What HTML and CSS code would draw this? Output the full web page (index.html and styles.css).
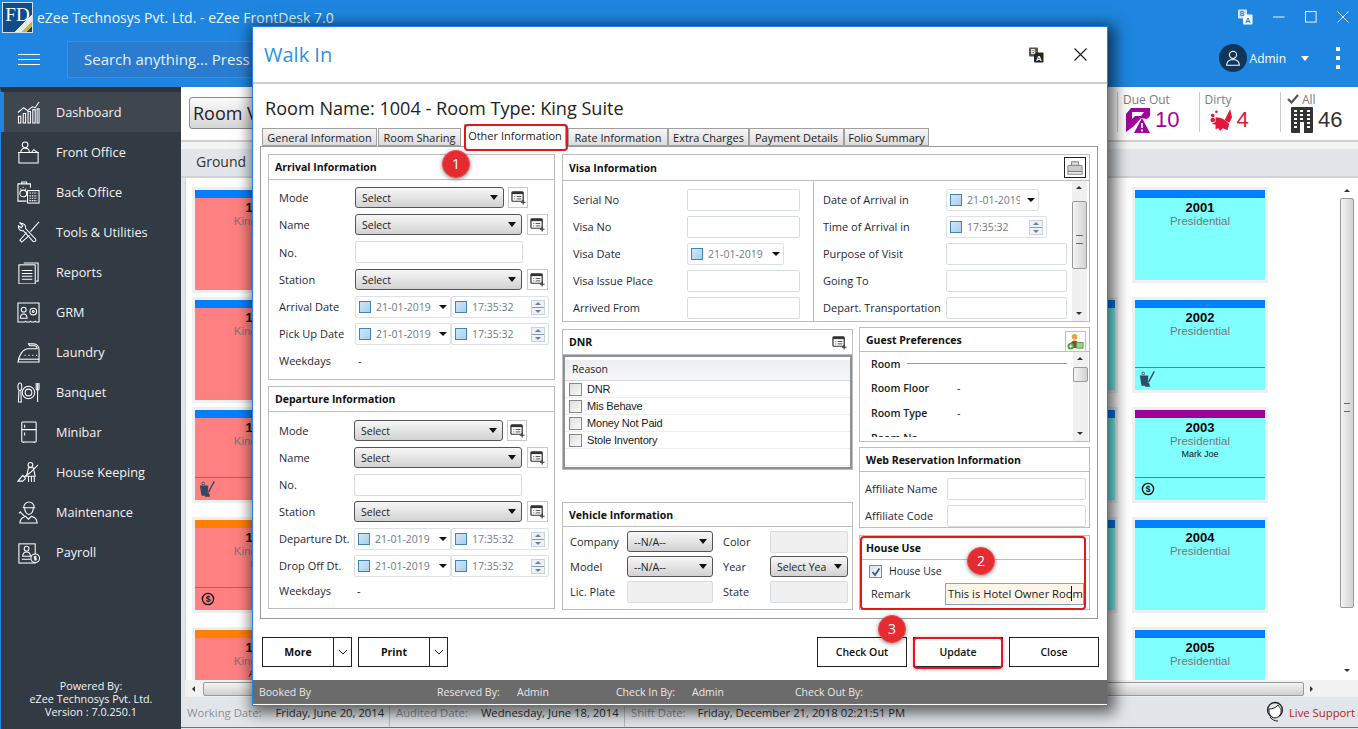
FILE: index.html
```html
<!DOCTYPE html>
<html lang="en">
<head>
<meta charset="utf-8">
<title>eZee FrontDesk</title>
<link rel="stylesheet" href="styles.css">
</head>
<body>
<svg class="sprite" aria-hidden="true">
  <symbol id="i-add" viewBox="0 0 16 16"><rect x="1" y="2" width="12" height="10" rx="1" fill="none" stroke="#333" stroke-width="1.3"/><rect x="1" y="2" width="12" height="2.4" fill="#333"/><path d="M3.500 7h1M6 7h5M3.500 9.500h1M6 9.500h5" stroke="#333" stroke-width=".9"/><path d="M13 10.500v5M10.500 13h5" stroke="#333" stroke-width="1.200"/></symbol>
  <symbol id="i-mop" viewBox="0 0 20 18"><path d="M1 5h10l-1 12H3z" fill="#2f4a63"/><circle cx="5" cy="2.500" r="1.600" fill="none" stroke="#2f4a63"/><path d="M18 0l-7 13" stroke="#2f4a63" stroke-width="1.600"/><path d="M8 13l4 1 1 4H7z" fill="#2f4a63"/></symbol>
  <symbol id="i-dollar" viewBox="0 0 14 14"><circle cx="7" cy="7" r="5.600" fill="none" stroke="#111" stroke-width="1.400"/><text x="7" y="10" font-size="8.500" font-weight="700" text-anchor="middle" font-family="Liberation Sans, sans-serif" fill="#111">$</text></symbol>
</svg>

<div class="app">
  <header class="header">
    <div class="titlebar">
      <div class="logo"><span>FD</span></div>
      <div class="app-title">eZee Technosys Pvt. Ltd. - eZee FrontDesk 7.0</div>
      <div class="win-controls">
        <svg class="win-lang" viewBox="0 0 16 16"><rect x="1" y="0.500" width="9" height="9" rx="1" fill="#cfe4f7"/><rect x="6" y="5.500" width="9.500" height="10" rx="1" fill="#fff"/><text x="10.800" y="14" font-size="8" font-weight="700" text-anchor="middle" fill="#1e87e0" font-family="Liberation Sans, sans-serif">A</text><text x="5" y="7.400" font-size="6.500" font-weight="700" text-anchor="middle" fill="#1e87e0" font-family="Liberation Sans, sans-serif">B</text></svg>
        <svg class="win-btn" viewBox="0 0 13 13"><path d="M0 6.500h12.500" stroke="#fff"/></svg>
        <svg class="win-btn" viewBox="0 0 13 13"><rect x=".5" y=".5" width="11.500" height="11.500" fill="none" stroke="#fff"/></svg>
        <svg class="win-btn" viewBox="0 0 13 13"><path d="M.5.5l12 12M12.500.5l-12 12" stroke="#fff"/></svg>
      </div>
    </div>
    <div class="navbar">
      <div class="hamburger"><i></i><i></i><i></i></div>
      <div class="search">Search anything... Press F3</div>
      <div class="user">
        <div class="avatar"><svg viewBox="0 0 20 20"><circle cx="10" cy="6.500" r="4" fill="none" stroke="#fff" stroke-width="1.200"/><path d="M3 18c0-4 3-5.500 4.500-6h5c1.500.5 4.500 2 4.500 6z" fill="none" stroke="#fff" stroke-width="1.200"/></svg></div>
        <span class="user-name">Admin</span>
        <span class="user-caret"></span>
        <div class="kebab"><i></i><i></i><i></i></div>
      </div>
    </div>
  </header>

  <div class="workspace">
    <aside class="sidebar">
      <nav class="menu">
        <a class="menu-item active"><svg viewBox="0 0 24 24"><path d="M1.500 23v-7h2.500v7zM6.500 23V13H9v10zM11.500 23V11H14v12zM16.500 23V9H19v14zM21 23V8h2v15z"/><path d="M1 12l6-5 4 3 5-4 3 1 4-6"/></svg><span>Dashboard</span></a>
        <a class="menu-item"><svg viewBox="0 0 24 24"><circle cx="8.500" cy="4" r="3"/><path d="M4 12c0-3 2-4.500 4.500-4.500S13 9 13 12"/><path d="M1 12h22M2 12v11h20V12M15 12l2.500-3 2 1.500 2 1.500"/></svg><span>Front Office</span></a>
        <a class="menu-item"><svg viewBox="0 0 24 24"><path d="M14 7V3H1v18h9M5 3V1h5v2"/><circle cx="6.500" cy="13" r="3.500"/><path d="M6.500 6v1M3.500 8l1 1M9.500 8l-1 1"/><rect x="11" y="10" width="12" height="13"/><path d="M13 12.500h8M13 15.500h8M13 18h8M13 20.500h8" stroke-dasharray="1.500 1"/></svg><span>Back Office</span></a>
        <a class="menu-item"><svg viewBox="0 0 24 24"><path d="M3 2l3 3-1.500 2-3-2c-.5 3 2 6 5 5l10 11c1.500 1.500 4 0 3-2L9 8c1-3-2-6-6-6z"/><path d="M23 1l-9 10M13 15l-8 7-2-2 7-8"/></svg><span>Tools &amp; Utilities</span></a>
        <a class="menu-item"><svg viewBox="0 0 24 24"><path d="M7 2h15v19h-2"/><rect x="2" y="4" width="17" height="20"/><path d="M5 10h11M5 13h11M5 16h11M5 19h11"/></svg><span>Reports</span></a>
        <a class="menu-item"><svg viewBox="0 0 24 24"><path d="M1 2h22v20h-3l-1-1-1 1h-3l-1-1-1 1h-3l-1-1-1 1H1z"/><circle cx="7" cy="9" r="2.500"/><path d="M3.500 18c0-3 1.500-4.500 3.500-4.500S10.500 15 10.500 18z"/><circle cx="17" cy="11" r="3.500"/><circle cx="17" cy="11" r="1"/></svg><span>GRM</span></a>
        <a class="menu-item"><svg viewBox="0 0 24 24"><path d="M23 22V9c0-3-2-6-6-6h-5l1 2h5c2 0 3 1 3 3H12C6 8 2 15 1 22z"/><path d="M1 19h22"/><path d="M8 15h1M12 15h1M16 15h1M20 15h1"/></svg><span>Laundry</span></a>
        <a class="menu-item"><svg viewBox="0 0 24 24"><ellipse cx="3" cy="6" rx="2" ry="4"/><path d="M2 10l-.5 12h3L4 10"/><circle cx="12" cy="12" r="6.500"/><circle cx="12" cy="12" r="3.500"/><path d="M20 2v6c0 1 1 1.500 1.500 1.500S23 9 23 8V2M21.500 2v20"/></svg><span>Banquet</span></a>
        <a class="menu-item"><svg viewBox="0 0 24 24"><rect x="5" y="1" width="15" height="21" rx="1"/><path d="M5 9h15M8 4v3M8 12v3M7 22v1M18 22v1"/></svg><span>Minibar</span></a>
        <a class="menu-item"><svg viewBox="0 0 24 24"><circle cx="14" cy="4" r="2.500"/><path d="M12 7l-2 9h9l-2-9z"/><path d="M22 4l-8 8-7 5M1 21l5-6 3 3-3 3zM12 16v6M15 16v6M18 16v6"/></svg><span>House Keeping</span></a>
        <a class="menu-item"><svg viewBox="0 0 24 24"><path d="M7 7c0-4 3-6 5.500-6S18 3 18 7zM6 7h13"/><path d="M8 7c0 4 2 7 4.500 7S17 11 17 7"/><path d="M3 23c0-4 3-6 6-7l3 3 3-3c4 1 6 3 6 7z"/><path d="M3 11l5 5M2 13l2-2"/></svg><span>Maintenance</span></a>
        <a class="menu-item"><svg viewBox="0 0 24 24"><rect x="2" y="3" width="17" height="20"/><circle cx="10" cy="8" r="2.500"/><path d="M6 16c0-3 2-4.500 4-4.500s4 1.500 4 4.500zM5 19h9"/><circle cx="19" cy="18" r="4.500" fill="#323a43"/><path d="M19 15.500v5M20.500 16.500h-2.500v1.500h2v1.500h-2"/></svg><span>Payroll</span></a>
      </nav>
      <div class="powered">
        <div>Powered By:</div>
        <div>eZee Technosys Pvt. Ltd.</div>
        <div>Version : 7.0.250.1</div>
      </div>
    </aside>

    <main class="main">
      <div class="toolbar">
        <button class="room-view">Room View</button>
        <div class="stats">
          <div class="stat">
            <div class="stat-label">Due Out</div>
            <div class="stat-value due">
              <svg viewBox="0 0 24 25"><path d="M0 22V6l5-6h19v8l-3 3-6-1-7 8-8 6z" fill="#a0059a"/><path d="M6 4h12l-3 4H9L6 11z" fill="#fff"/><path d="M16 10l8 15H8z" fill="#a0059a"/><path d="M16 15v5M16 21.500v2" stroke="#fff" stroke-width="1.800"/></svg>
              <span>10</span>
            </div>
          </div>
          <div class="stat">
            <div class="stat-label">Dirty</div>
            <div class="stat-value dirty">
              <svg viewBox="0 0 24 25"><path d="M22 0l-6 12 5 3 3-6z" fill="#e0183c"/><path d="M6 9c4 0 7 1 10 3l5 4-2 7-5-2-3 3-2-3-3 1v-5l-4-1 4-2z" fill="#e0183c"/><circle cx="3" cy="7" r="2" fill="#e0183c"/><circle cx="7" cy="3" r="1.400" fill="#e0183c"/><circle cx="3" cy="12" r="2.500" fill="#e0183c"/></svg>
              <span>4</span>
            </div>
          </div>
          <div class="stat">
            <div class="stat-label"><svg class="check" viewBox="0 0 12 10"><path d="M1 5l3.500 3.500L11 1" fill="none" stroke="#555" stroke-width="2.200"/></svg>All</div>
            <div class="stat-value all">
              <svg viewBox="0 0 22 26"><rect width="22" height="26" rx="1" fill="#333"/><path d="M3 4h3M9 4h3M16 4h3M3 8h3M9 8h3M16 8h3M3 12h3M9 12h3M16 12h3M3 16h3M16 16h3M3 20h3M16 20h3" stroke="#fff" stroke-width="2"/><rect x="9" y="15" width="4" height="11" fill="#fff"/></svg>
              <span>46</span>
            </div>
          </div>
        </div>
      </div>
      <div class="toolbar-gap"></div>
      <div class="floor-bar">Ground</div>
      <div class="floor-area">
        <div class="room-grid">
          <div class="room-col">
            <div class="room pink tall"><div class="room-top blue"></div><b>1001</b><span>King Suite</span></div>
            <div class="room pink tall"><div class="room-top blue"></div><b>1002</b><span>King Suite</span></div>
            <div class="room pink"><div class="room-top blue"></div><b>1003</b><span>King Suite</span><div class="room-foot"><svg class="mop"><use href="#i-mop"/></svg></div></div>
            <div class="room pink"><div class="room-top orange"></div><b>1004</b><span>King Suite</span><em>Lara</em><div class="room-foot"><svg class="dollar"><use href="#i-dollar"/></svg></div></div>
            <div class="room pink"><div class="room-top orange"></div><b>1005</b><span>King Suite</span><em>Abdul</em></div>
          </div>
          <div class="room-col far">
            <div class="room ghost"></div>
            <div class="room cyan"><div class="room-top blue"></div></div>
            <div class="room cyan"><div class="room-top blue"></div></div>
            <div class="room cyan"><div class="room-top blue"></div></div>
            <div class="room ghost"></div>
          </div>
          <div class="room-col">
            <div class="room cyan"><div class="room-top blue"></div><b>2001</b><span>Presidential</span></div>
            <div class="room cyan"><div class="room-top blue"></div><b>2002</b><span>Presidential</span><div class="room-foot"><svg class="mop"><use href="#i-mop"/></svg></div></div>
            <div class="room cyan"><div class="room-top purple"></div><b>2003</b><span>Presidential</span><em>Mark Joe</em><div class="room-foot"><svg class="dollar"><use href="#i-dollar"/></svg></div></div>
            <div class="room cyan"><div class="room-top blue"></div><b>2004</b><span>Presidential</span></div>
            <div class="room cyan"><div class="room-top blue"></div><b>2005</b><span>Presidential</span></div>
          </div>
        </div>
        <div class="vscroll page-v"><i class="up"></i><i class="thumb"></i><i class="down"></i></div>
      </div>
      <div class="hscroll"><i class="left"></i><i class="thumb"></i><i class="right"></i></div>
      <footer class="status">
        <div class="status-cell first"><span>Working Date:</span><b>Friday, June 20, 2014</b></div>
        <div class="status-cell second"><span>Audited Date:</span><b>Wednesday, June 18, 2014</b></div>
        <div class="status-cell third"><span>Shift Date:</span><b>Friday, December 21, 2018 02:21:51 PM</b></div>
        <div class="live">
          <svg viewBox="0 0 20 22"><circle cx="10" cy="9" r="7.500" fill="none" stroke="#222" stroke-width="1.300"/><path d="M4 8c3 0 7-1 9-4 1 2 2 3 3 4v4c-1 3-4 5-6 5s-5-2-6-5z" fill="#fff" stroke="#222"/><path d="M5 16c2 3 5 4 8 4" fill="none" stroke="#222"/></svg>
          <span>Live Support</span>
        </div>
      </footer>
    </main>
  </div>

  <section class="modal">
    <div class="modal-head">
      <h1>Walk In</h1>
      <svg class="modal-lang" viewBox="0 0 16 16"><rect x="1" y=".5" width="9" height="9" rx="1" fill="#555"/><rect x="6" y="5.500" width="9.500" height="10" rx="1" fill="#222"/><text x="10.800" y="14" font-size="8" font-weight="700" text-anchor="middle" fill="#fff" font-family="Liberation Sans, sans-serif">A</text><text x="5" y="7.400" font-size="6.500" font-weight="700" text-anchor="middle" fill="#fff" font-family="Liberation Sans, sans-serif">B</text></svg>
      <svg class="modal-close" viewBox="0 0 13 13"><path d="M.5.5l12 12M12.500.5l-12 12" stroke="#222" stroke-width="1.200"/></svg>
    </div>
    <h2 class="room-name">Room Name: 1004 - Room Type: King Suite</h2>
    <div class="tabs">
      <div class="tab t1">General Information</div>
      <div class="tab t2">Room Sharing</div>
      <div class="tab selected t3">Other Information</div>
      <div class="tab t4">Rate Information</div>
      <div class="tab t5">Extra Charges</div>
      <div class="tab t6">Payment Details</div>
      <div class="tab t7">Folio Summary</div>
    </div>
    <div class="tab-panel">
      <div class="col-left">
        <div class="panel arrival">
          <div class="panel-head">Arrival Information</div>
          <div class="form">
            <div class="row"><label>Mode</label><div class="select w149">Select</div><button class="add near"><svg><use href="#i-add"/></svg></button></div>
            <div class="row"><label>Name</label><div class="select w167">Select</div><button class="add"><svg><use href="#i-add"/></svg></button></div>
            <div class="row tall-row"><label>No.</label><div class="input w168"></div></div>
            <div class="row"><label>Station</label><div class="select w167">Select</div><button class="add"><svg><use href="#i-add"/></svg></button></div>
            <div class="row"><label>Arrival Date</label><div class="date w96"><i class="cb"></i>21-01-2019<i class="caret"></i></div><div class="date w98"><i class="cb"></i>17:35:32<i class="spin"></i></div></div>
            <div class="row"><label>Pick Up Date</label><div class="date w96"><i class="cb"></i>21-01-2019<i class="caret"></i></div><div class="date w98"><i class="cb"></i>17:35:32<i class="spin"></i></div></div>
            <div class="row"><label>Weekdays</label><span class="dash">-</span></div>
          </div>
        </div>
        <div class="panel departure">
          <div class="panel-head">Departure Information</div>
          <div class="form">
            <div class="row tall-row"><label>Mode</label><div class="select w149">Select</div><button class="add near"><svg><use href="#i-add"/></svg></button></div>
            <div class="row"><label>Name</label><div class="select w168">Select</div><button class="add"><svg><use href="#i-add"/></svg></button></div>
            <div class="row"><label>No.</label><div class="input w168"></div></div>
            <div class="row"><label>Station</label><div class="select w168">Select</div><button class="add"><svg><use href="#i-add"/></svg></button></div>
            <div class="row"><label>Departure Dt.</label><div class="date w97"><i class="cb"></i>21-01-2019<i class="caret"></i></div><div class="date w98"><i class="cb"></i>17:35:32<i class="spin"></i></div></div>
            <div class="row"><label>Drop Off Dt.</label><div class="date w97"><i class="cb"></i>21-01-2019<i class="caret"></i></div><div class="date w98"><i class="cb"></i>17:35:32<i class="spin"></i></div></div>
            <div class="row last"><label>Weekdays</label><span class="dash">-</span></div>
          </div>
        </div>
      </div>
      <div class="col-right">
        <div class="panel visa">
          <div class="panel-head">Visa Information
            <button class="print"><svg viewBox="0 0 18 16"><path d="M5 5V1h8v4" fill="#ddd" stroke="#777"/><rect x="1" y="5" width="16" height="7" rx="1" fill="#ccc" stroke="#777"/><rect x="1" y="12" width="16" height="3" fill="#eee" stroke="#777"/></svg></button>
          </div>
          <div class="visa-body">
            <div class="visa-left">
              <div class="vrow"><label>Serial No</label><div class="input w113"></div></div>
              <div class="vrow"><label>Visa No</label><div class="input w113"></div></div>
              <div class="vrow"><label>Visa Date</label><div class="date w97"><i class="cb"></i>21-01-2019<i class="caret"></i></div></div>
              <div class="vrow"><label>Visa Issue Place</label><div class="input w113"></div></div>
              <div class="vrow"><label>Arrived From</label><div class="input w113"></div></div>
            </div>
            <div class="visa-right">
              <div class="vrow"><label>Date of Arrival in</label><div class="date w93"><i class="cb"></i><span class="clip">21-01-2019</span><i class="caret"></i></div></div>
              <div class="vrow"><label>Time of Arrival in</label><div class="date w101"><i class="cb"></i>17:35:32<i class="spin"></i></div></div>
              <div class="vrow"><label>Purpose of Visit</label><div class="input w121"></div></div>
              <div class="vrow"><label>Going To</label><div class="input w121"></div></div>
              <div class="vrow"><label>Depart. Transportation</label><div class="input w121"></div></div>
            </div>
            <div class="vscroll visa-v"><i class="up"></i><i class="thumb"></i><i class="down"></i></div>
          </div>
        </div>
        <div class="lower">
          <div class="lower-left">
            <div class="panel dnr">
              <div class="panel-head">DNR<svg class="dnr-add"><use href="#i-add"/></svg></div>
              <div class="reason-list">
                <div class="reason-head">Reason</div>
                <div class="reason"><i class="box"></i>DNR</div>
                <div class="reason"><i class="box"></i>Mis Behave</div>
                <div class="reason"><i class="box"></i>Money Not Paid</div>
                <div class="reason"><i class="box"></i>Stole Inventory</div>
                <div class="reason"></div>
              </div>
            </div>
            <div class="panel vehicle">
              <div class="panel-head">Vehicle Information</div>
              <div class="vehicle-grid">
                <label>Company</label><div class="select v-sel">--N/A--</div><label>Color</label><div class="input disabled"></div>
                <label>Model</label><div class="select v-sel">--N/A--</div><label>Year</label><div class="select year">Select Yea</div>
                <label>Lic. Plate</label><div class="input disabled v-sel"></div><label>State</label><div class="input disabled"></div>
              </div>
            </div>
          </div>
          <div class="lower-right">
            <div class="panel guest">
              <div class="panel-head">Guest Preferences
                <button class="pref-btn"><svg viewBox="0 0 18 18"><circle cx="8" cy="4" r="3" fill="#e8a33c"/><path d="M3 16c0-5 2-8 5-8s5 3 5 8z" fill="#b23a2a"/><rect x="10" y="10" width="7" height="6" fill="#9fd08a" stroke="#5a9c4a"/><circle cx="4" cy="14" r="3.500" fill="#3ba53b"/><path d="M2 14h4M4 12v4" stroke="#fff"/></svg></button>
              </div>
              <div class="guest-body">
                <div class="guest-list">
                  <div class="g-row"><b>Room</b><i class="g-line"></i></div>
                  <div class="g-row"><b>Room Floor</b><span>-</span></div>
                  <div class="g-row"><b>Room Type</b><span>-</span></div>
                  <div class="g-row"><b>Room No</b></div>
                </div>
                <div class="vscroll guest-v"><i class="up"></i><i class="thumb"></i><i class="down"></i></div>
              </div>
            </div>
            <div class="panel web">
              <div class="panel-head">Web Reservation Information</div>
              <div class="web-body">
                <div class="wrow"><label>Affiliate Name</label><div class="input grow"></div></div>
                <div class="wrow"><label>Affiliate Code</label><div class="input grow"></div></div>
              </div>
            </div>
            <div class="panel house">
              <div class="panel-head">House Use</div>
              <div class="house-check"><i class="checked"><svg viewBox="0 0 10 10"><path d="M1.500 5l2.500 3L8.500 1.500" fill="none" stroke="#35588f" stroke-width="1.800"/></svg></i>House Use</div>
              <div class="house-remark"><label>Remark</label><div class="remark">This is Hotel Owner Roo<span class="cursor">m</span></div></div>
            </div>
          </div>
        </div>
      </div>
    </div>
    <div class="actions">
      <div class="split"><button>More</button><button class="split-arrow"><svg viewBox="0 0 10 6"><path d="M1 1l4 4 4-4" fill="none" stroke="#222"/></svg></button></div>
      <div class="split"><button>Print</button><button class="split-arrow"><svg viewBox="0 0 10 6"><path d="M1 1l4 4 4-4" fill="none" stroke="#222"/></svg></button></div>
      <button class="act first-act">Check Out</button>
      <button class="act">Update</button>
      <button class="act">Close</button>
    </div>
    <div class="modal-foot">
      <span class="f1">Booked By</span>
      <span class="f2">Reserved By:</span><span class="f3">Admin</span>
      <span class="f4">Check In By:</span><span class="f5">Admin</span>
      <span class="f6">Check Out By:</span>
    </div>
    <div class="mark mark-tab"></div>
    <div class="mark mark-house"></div>
    <div class="mark mark-update"></div>
    <div class="badge b1">1</div>
    <div class="badge b2">2</div>
    <div class="badge b3">3</div>
  </section>
</div>
</body>
</html>
```
FILE: styles.css
```css
* { box-sizing: border-box; }
html, body { margin: 0; padding: 0; }
body { font-family: "Open Sans", "Noto Sans", sans-serif; font-size: 11px; color: #222; background: #fff; }
i, em { font-style: normal; }
.sprite { display: none; }
button { font: inherit; cursor: default; }

.app { position: relative; width: 1358px; height: 729px; overflow: hidden; display: flex; flex-direction: column; }

/* header */
.header { height: 87px; background: #1e86e0; color: #fff; flex: none; }
.titlebar { height: 41px; display: flex; align-items: flex-start; padding: 2px 9px 0 2px; }
.logo { width: 31px; height: 31px; border: 1px solid #cfe2f5; background: linear-gradient(135deg, #0f4d8a 0 70%, #e8e8e8 70% 82%, #d7b21c 82% 90%, #1b3f7a 90%); display: flex; justify-content: center; padding-top: 1px; }
.logo span { font-family: "Liberation Serif", serif; font-size: 19px; line-height: 22px; color: #fff; }
.app-title { margin-left: 4px; font-size: 14px; line-height: 32px; color: #eef6fd; }
.win-controls { margin-left: auto; display: flex; align-items: center; height: 30px; gap: 20px; }
.win-lang { width: 16px; height: 16px; }
.win-btn { width: 12px; height: 12px; }
.navbar { height: 46px; padding-bottom: 9px; display: flex; align-items: center; }
.hamburger { width: 22px; margin-left: 18px; display: flex; flex-direction: column; gap: 4px; }
.hamburger i { height: 1px; background: #fff; }
.search { margin-left: 27px; width: 400px; height: 37px; background: #2a7cd0; border: 1px solid #3a8fdf; color: #e6f1fb; font-size: 15px; line-height: 35px; padding-left: 16px; }
.user { margin-left: auto; margin-top: -3px; display: flex; align-items: center; height: 100%; padding-left: 1px; }
.avatar { width: 28px; height: 28px; border-radius: 50%; background: #10365c; display: flex; align-items: center; justify-content: center; }
.avatar svg { width: 18px; height: 18px; }
.user-name { margin-left: 3px; font-size: 12px; }
.user-caret { margin-left: 15px; border: 4.500px solid transparent; border-top: 5px solid #fff; border-bottom: 0; }
.kebab { margin: 0 18px 0 27px; width: 4px; display: flex; flex-direction: column; gap: 5px; }
.kebab i { height: 4px; background: #fff; }

/* workspace */
.workspace { flex: 1; display: flex; min-height: 0; }
.sidebar { width: 181px; flex: none; background: #323a43; border-left: 1px solid #1e86e0; border-top: 5px solid #2c333b; display: flex; flex-direction: column; color: #f2f4f6; }
.menu { display: flex; flex-direction: column; }
.menu-item { height: 40px; display: flex; align-items: center; padding-left: 16px; font-size: 12.700px; }
.menu-item.active { background: #3e464f; border-left: 3px solid #1e86e0; padding-left: 13px; }
.menu-item svg { width: 23px; height: 23px; flex: none; fill: none; stroke: #fff; stroke-width: 1.100; margin-right: 16px; }
.powered { margin-top: auto; padding-bottom: 11px; text-align: center; font-size: 10.800px; line-height: 13px; }

.main { flex: 1; min-width: 0; display: flex; flex-direction: column; background: #e2e6ea; }
.toolbar { height: 55px; background: #fff; border-bottom: 2px solid #cfcfcf; display: flex; flex: none; position: relative; }
.room-view { margin: 10px 0 0 8px; width: 120px; height: 32px; border: 1px solid #8a8a8a; border-radius: 3px; background: linear-gradient(#fafafa, #d6d6d6); font-size: 18px; padding: 0 0 0 3px; text-align: left; color: #222; }
.stats { margin-left: auto; display: flex; padding-top: 5px; }
.stat { width: 81.500px; height: 40px; border-left: 1px solid #c9c9c9; padding-left: 5px; }
.stat:last-child { width: 78px; }
.stat-label { font-size: 12px; line-height: 15px; color: #7c7c7c; display: flex; align-items: center; height: 14px; }
.stat-value { display: flex; align-items: center; font-family: "Liberation Sans", sans-serif; font-size: 22px; line-height: 26px; padding-left: 3px; margin-top: 1px; }
.stat-value svg { width: 24px; height: 25px; margin-right: 5px; }
.stat-value.due { color: #a0059a; }
.stat-value.dirty { color: #e0183c; padding-left: 5px; }
.stat-value.dirty svg { width: 22px; }
.stat-value.all { color: #333; padding-left: 5px; }
.stat-value.all svg { width: 22px; height: 26px; }
.check { width: 12px; height: 10px; margin: 0 3px 0 1px; }
.toolbar-gap { height: 7px; background: #f3f4f6; flex: none; }
.floor-bar { height: 29px; background: #e2e6ea; border-bottom: 2px solid #d0d3d6; font-size: 14px; line-height: 26px; padding-left: 15px; color: #333; flex: none; }
.floor-area { height: 502px; margin-left: 4px; background: #fff; display: flex; flex: none; overflow: hidden; border-left: 1px solid #cfd3d6; }
.room-grid { flex: 1; display: flex; padding: 12px 0 0 9px; height: 502px; overflow: hidden; }
.room-col { width: 130px; flex: none; display: flex; flex-direction: column; gap: 20px; margin-right: 20px; }
.room-col.far { margin-left: 640px; }
.room { height: 90px; flex: none; position: relative; text-align: center; box-shadow: 0 0 0 3px #f0f0f0; color: #777; font-family: "Liberation Sans", sans-serif; display: flex; flex-direction: column; align-items: center; }
.room.tall { height: 100px; margin-bottom: -10px; }
.room.ghost { visibility: hidden; }
.room.pink { background: #ff8080; }
.room.cyan { background: #80ffff; }
.room-top { height: 8px; width: 100%; flex: none; }
.room-top.blue { background: #0080ff; }
.room-top.orange { background: #ff8000; }
.room-top.purple { background: #a0009a; }
.room b { font-size: 13px; line-height: 15px; margin-top: 2px; color: #000; }
.room span { font-size: 11.500px; line-height: 13px; }
.room em { font-size: 9px; line-height: 12px; margin-top: 0; color: #111; }
.room-foot { position: absolute; left: 0; right: 0; bottom: 0; height: 23px; border-top: 1px solid #777; display: flex; align-items: center; padding-left: 4px; }
.mop { width: 17px; height: 16px; }
.dollar { width: 14px; height: 14px; margin-left: 2px; }

.vscroll { display: flex; flex-direction: column; background: #f0f0f0; flex: none; }
.vscroll i { display: block; }
.vscroll .up { height: 14px; position: relative; }
.vscroll .up::after { content: ""; position: absolute; left: 4px; top: 5px; border: 3px solid transparent; border-bottom: 3px solid #333; border-top: 0; }
.vscroll .down { height: 14px; margin-top: auto; position: relative; }
.vscroll .down::after { content: ""; position: absolute; left: 4px; top: 5px; border: 3px solid transparent; border-top: 3px solid #333; border-bottom: 0; }
.vscroll .thumb { border: 1px solid #9a9a9a; border-radius: 2px; background: linear-gradient(90deg, #f4f4f4, #d2d2d2); margin-top: 1px; position: relative; }
.page-v { width: 14px; margin: 6px 4px 0 auto; height: 494px; background: #fff; }
.page-v .thumb { height: 410px; margin-top: 0; }
.page-v .thumb::after, .visa-v .thumb::after { content: ""; position: absolute; left: 3px; right: 3px; top: 50%; height: 7px; border-top: 1px solid #666; border-bottom: 1px solid #666; }
.hscroll { height: 17px; margin-left: 4px; background: #f2f2f2; display: flex; align-items: center; flex: none; padding-right: 38px; }
.hscroll .left { width: 18px; height: 16px; flex: none; position: relative; }
.hscroll .left::after { content: ""; position: absolute; left: 7px; top: 5px; border: 3px solid transparent; border-right: 3px solid #333; border-left: 0; }
.hscroll .thumb { flex: 1; height: 14px; border: 1px solid #9a9a9a; border-radius: 2px; background: linear-gradient(#f4f4f4, #cfcfcf); }
.hscroll .right { width: 16px; height: 16px; flex: none; position: relative; }
.hscroll .right::after { content: ""; position: absolute; left: 6px; top: 5px; border: 3px solid transparent; border-left: 3px solid #333; border-right: 0; }
.status { height: 31px; flex: none; background: #e2e6ea; border-bottom: 1px solid #1e86e0; display: flex; align-items: center; font-size: 11.300px; padding-left: 6px; }
.status-cell { display: flex; height: 100%; align-items: center; border-right: 1px solid #b6b9bc; }
.status-cell span { color: #8a9097; }
.status-cell b { font-weight: 400; color: #333; }
.status-cell.first { width: 203px; }
.status-cell.first b { margin-left: 14px; }
.status-cell.second { width: 235px; padding-left: 6px; }
.status-cell.second b { margin-left: 13px; }
.status-cell.third { border-right: 0; padding-left: 6px; }
.status-cell.third b { margin-left: 12px; }
.live { margin-left: auto; display: flex; align-items: center; color: #a5281c; padding-right: 3px; }
.live svg { width: 20px; height: 22px; margin-right: 4px; }

/* modal */
.modal { position: absolute; left: 252px; top: 26px; width: 856px; height: 680px; background: #fff; border: 1px solid #1e86e0; box-shadow: 3px 3px 14px 4px rgba(0,0,0,.6); display: flex; flex-direction: column; }
.modal-head { height: 57px; flex: none; border-bottom: 2px solid #cfcfcf; display: flex; align-items: center; padding-left: 11px; }
.modal-head h1 { margin: 0; font-weight: 400; font-size: 20px; color: #2f8fe3; }
.modal-lang { width: 16px; height: 16px; margin-left: auto; }
.modal-close { width: 13px; height: 13px; margin: 0 20px 0 30px; }
.room-name { margin: 12px 0 4px 12px; font-weight: 400; font-size: 18.100px; line-height: 25px; height: 25px; color: #222; flex: none; }
.tabs { height: 21px; padding: 3px 0 0 9px; display: flex; flex: none; position: relative; z-index: 1; }
.tab { height: 18px; border: 1px solid #a0a0a0; background: linear-gradient(#f6f6f6, #dcdcdc); font-size: 11px; line-height: 17px; text-align: center; margin-right: 1px; white-space: nowrap; }
.tab.selected { height: 23px; margin-top: -4px; line-height: 21px; background: #fff; border-bottom: 1px solid #fff; }
.t1 { width: 115px; } .t2 { width: 83px; } .t3 { width: 102px; margin-left: 2px; margin-right: 2px; }
.t4 { width: 100px; margin-right: 0; } .t5 { width: 81px; margin-right: 0; } .t6 { width: 95px; margin-right: 0; } .t7 { width: 85px; }
.tab-panel { margin: 0 9px 0 7px; height: 473px; flex: none; border: 1px solid #9a9a9a; padding: 7px 7px 0; display: flex; gap: 7px; }
.col-left { width: 287px; flex: none; display: flex; flex-direction: column; gap: 6px; }
.col-right { flex: 1; display: flex; flex-direction: column; min-width: 0; }
.panel { border: 1px solid #bdbdbd; background: #fff; flex: none; }
.panel-head { height: 25px; border-bottom: 1px solid #bdbdbd; font-weight: 700; font-size: 10.500px; padding-left: 6px; color: #111; display: flex; align-items: center; position: relative; }
.arrival { height: 226px; }
.departure { height: 223px; }
.form { padding-top: 4px; }
.row { height: 27px; display: flex; align-items: center; padding-left: 10px; }
.row.tall-row { height: 28px; }
.row.last { height: 23px; }
label { color: #1e2a36; font-size: 11px; white-space: nowrap; }
.row label { width: 76px; flex: none; }
.departure .row label { width: 75px; }
.dash { margin-left: 3px; }
.select { height: 21px; border: 1px solid #555; border-radius: 3px; background: linear-gradient(#f7f7f7, #d2d2d2); font-size: 10.500px; line-height: 20px; padding-left: 6px; position: relative; color: #222; flex: none; }
.select::after { content: ""; position: absolute; right: 5px; top: 7px; border: 4px solid transparent; border-top: 5px solid #111; border-bottom: 0; }
.w149 { width: 149px; } .w167 { width: 167px; } .w168 { width: 168px; }
.w96 { width: 96px; } .w97 { width: 97px; } .w98 { width: 98px; } .w93 { width: 93px; } .w101 { width: 101px; } .w113 { width: 113px; } .w121 { width: 121px; }
.add { width: 21px; height: 21px; margin-left: 5px; border: 1px solid #c8c8c8; background: #fff; padding: 2px; flex: none; }
.add.near { width: 20px; margin-left: 4px; }
.add svg { width: 15px; height: 15px; display: block; }
.input { height: 22px; border: 1px solid #d8dde2; border-radius: 2px; background: #fff; flex: none; }
.input.disabled { background: #f0f0f0; }
.date { height: 22px; border: 1px solid #dbe1e6; border-radius: 2px; background: #fff; color: #6f7a84; font-size: 10.500px; line-height: 20px; display: flex; align-items: center; padding-left: 3px; position: relative; flex: none; }
.cb { width: 12px; height: 12px; border: 1px solid #3f86b5; background: linear-gradient(135deg, #cfe6f8, #a8d0ee); margin-right: 5px; flex: none; }
.caret { margin-left: auto; margin-right: 3px; border: 4px solid transparent; border-top: 4px solid #111; border-bottom: 0; }
.spin { position: absolute; right: 3px; top: 3px; width: 14px; height: 15px; border: 1px solid #c9d2da; background: linear-gradient(#eef2f6 47%, #8a9ab0 47% 53%, #eef2f6 53%); }
.spin::before { content: ""; position: absolute; left: 3px; top: 1px; border: 3px solid transparent; border-bottom: 3px solid #6a7fa0; border-top: 0; }
.spin::after { content: ""; position: absolute; left: 3px; bottom: 1px; border: 3px solid transparent; border-top: 3px solid #6a7fa0; border-bottom: 0; }
.clip { width: 53px; overflow: hidden; white-space: nowrap; }

.visa { height: 168px; }
.visa .panel-head { height: 26px; }
.print { position: absolute; right: 3px; top: 2px; width: 22px; height: 21px; border: 1px solid #222; background: #fff; padding: 1px 2px; }
.print svg { width: 16px; height: 16px; display: block; }
.visa-body { display: flex; height: 140px; }
.visa-left { width: 251px; flex: none; border-right: 1px solid #bdbdbd; padding: 8px 0 0 10px; }
.visa-right { width: 258px; flex: none; padding: 8px 0 0 9px; }
.vrow { height: 27px; display: flex; align-items: flex-start; }
.vrow label { line-height: 22px; flex: none; }
.visa-left .vrow label { width: 114px; }
.visa-right .vrow label { width: 123px; }
.visa-v { width: 15px; }
.visa-v .thumb { height: 68px; margin-top: 6px; }
.lower { display: flex; gap: 6px; }
.lower-left { width: 291px; flex: none; }
.lower-right { width: 231px; flex: none; }
.lower .panel-head { height: 24px; }
.dnr { margin-top: 7px; height: 141px; }
.lower .dnr .panel-head { height: 25px; }
.dnr-add { width: 15px; height: 15px; margin-left: auto; margin-right: 5px; }
.reason-list { border: 2px solid #8d9297; height: 114px; }
.reason-head { height: 24px; font-size: 10.500px; line-height: 24px; padding-left: 7px; border-bottom: 1px solid #d6d6d6; background: linear-gradient(#fff 15%, #eceef0 15%, #f6f7f8); }
.reason { height: 17px; border-bottom: 1px solid #eee; display: flex; align-items: center; padding-left: 4px; font-family: "Liberation Sans", sans-serif; font-size: 11px; letter-spacing: -.2px; color: #222; }
.box { width: 13px; height: 13px; border: 1px solid #888; background: linear-gradient(135deg, #dedede, #fafafa); margin-right: 5px; }
.vehicle { margin-top: 32px; height: 108px; }
.vehicle-grid { display: grid; grid-template-columns: 57px 86px 57px 78px; grid-auto-rows: 25px; align-items: center; padding: 2px 0 0 7px; }
.v-sel { width: 86px; }
.year { width: 78px; }
.vehicle-grid label:nth-child(4n+3) { padding-left: 10px; }
.guest { margin-top: 5px; height: 115px; }
.pref-btn { position: absolute; right: 3px; top: 3px; width: 21px; height: 21px; border: 1px solid #c0c0c0; background: #fff; padding: 1px; }
.pref-btn svg { width: 17px; height: 17px; display: block; }
.guest-body { display: flex; height: 89px; overflow: hidden; padding-right: 1px; }
.guest-list { flex: 1; padding: 0 0 0 11px; overflow: hidden; height: 85px; }
.g-row { height: 25px; display: flex; align-items: center; font-size: 10.500px; }
.g-row b { font-weight: 600; color: #222; width: 86px; flex: none; }
.g-row:first-child { height: 23px; }
.g-row:first-child b { width: 36px; }
.g-line { height: 1px; background: #999; width: 160px; }
.guest-v { width: 15px; }
.guest-v .thumb { height: 15px; }
.web { margin-top: 5px; height: 81px; }
.web-body { padding: 6px 3px 0 5px; }
.wrow { display: flex; height: 27px; align-items: flex-start; }
.wrow label { width: 82px; flex: none; line-height: 22px; }
.grow { flex: 1; }
.house { margin-top: 7px; height: 75px; }
.house-check { display: flex; align-items: center; height: 22px; padding-left: 9px; font-size: 10.500px; color: #1e2a36; }
.checked { width: 13px; height: 13px; border: 1px solid #888; background: linear-gradient(135deg, #dde4ef, #f6f8fb); margin-right: 7px; display: block; padding: 1px; }
.checked svg { width: 10px; height: 10px; display: block; }
.house-remark { display: flex; align-items: flex-start; padding: 1px 0 0 11px; }
.house-remark label { width: 74px; line-height: 22px; flex: none; }
.remark { width: 139px; height: 22px; border: 1px solid #7fa8d0; background: #fdf6e8; font-size: 11.200px; line-height: 19px; padding-left: 2px; white-space: nowrap; color: #222; overflow: hidden; }
.cursor { border-left: 1px solid #111; margin-left: -1px; }

.actions { height: 61px; padding: 4px 8px 0 9px; flex: none; display: flex; align-items: center; gap: 6px; }
.split { display: flex; }
.split button, .act { height: 30px; background: #fff; border: 1px solid #222; font-size: 10.500px; font-weight: 600; padding: 0; color: #111; }
.split button:first-child { width: 71px; border-right: 0; font-weight: 700; }
.split-arrow { width: 19px; display: flex; align-items: center; justify-content: center; }
.split-arrow svg { width: 10px; height: 6px; }
.act { width: 90px; }
.first-act { margin-left: auto; }
.modal-foot { height: 24px; background: #6b6b6b; border-bottom: 1px solid #1e86e0; color: #e8e8e8; font-size: 10.500px; line-height: 25px; display: flex; padding-left: 6px; flex: none; }
.f1 { width: 178px; } .f2 { width: 80px; } .f3 { width: 99px; } .f4 { width: 76px; } .f5 { width: 103px; }

.mark { position: absolute; z-index: 2; border: 2px solid #e8141c; border-radius: 4px; pointer-events: none; }
.mark-tab { left: 211px; top: 97px; width: 104px; height: 27px; }
.mark-house { left: 607px; top: 509px; width: 226px; height: 74px; }
.mark-update { left: 660px; top: 610px; width: 90px; height: 32px; box-shadow: 0 0 4px rgba(232,20,28,.3); }
.badge { position: absolute; z-index: 3; width: 28px; height: 28px; border-radius: 50%; background: #e32b30; border: 1px solid #f04a4a; color: #fff; font-size: 14px; line-height: 26px; text-align: center; box-shadow: 0 1px 4px rgba(0,0,0,.45); }
.b1 { left: 189px; top: 123px; }
.b2 { left: 714px; top: 520px; }
.b3 { left: 625px; top: 588px; }
```
